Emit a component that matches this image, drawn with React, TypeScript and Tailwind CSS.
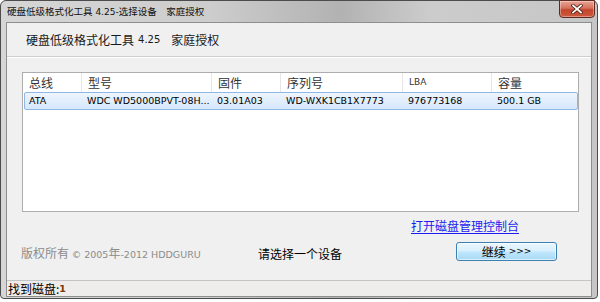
import React from "react";

const cols = [
  { label: "总线", w: "w-[59px]", latin: false },
  { label: "型号", w: "w-[130px]", latin: false },
  { label: "固件", w: "w-[69px]", latin: false },
  { label: "序列号", w: "w-[122px]", latin: false },
  { label: "LBA", w: "w-[89px]", latin: true },
  { label: "容量", w: "flex-1", latin: false },
];

const row = ["ATA", "WDC WD5000BPVT-08H...", "03.01A03", "WD-WXK1CB1X7773", "976773168", "500.1 GB"];

function Latin({ children, className = "" }: { children: React.ReactNode; className?: string }) {
  return <span className={"font-['DejaVu_Sans',sans-serif] text-[9.5px] " + className}>{children}</span>;
}

export default function App() {
  return (
    <div className="w-[600px] h-[302px] bg-white font-['Noto_Sans_CJK_SC',sans-serif] text-black">
      <div className="relative w-[598px] h-[299px] flex flex-col px-[5px] pb-[1px] border border-[#4c4c4c] rounded-t-[6px] rounded-b-[4px] bg-[linear-gradient(to_right,#d6d6d6,#cdcdcd_35%,#b2b2b2_57%,#cccccc_72%,#c6c6c6)]">
        {/* title bar */}
        <div className="h-[21px] flex items-center pl-[1px] text-[9.5px] text-[#111] leading-none">
          <span>
            硬盘低级格式化工具<Latin className="text-[9px]"> 4.25-</Latin>选择设备　家庭授权
          </span>
        </div>

        {/* close button */}
        <div className="absolute top-[-1px] right-[2px] w-[36px] h-[18px] rounded-b-[4px] border border-[#5e2a22] bg-[linear-gradient(to_bottom,#e9a697,#d5705c_45%,#c2452c_55%,#d0593c)] flex items-center justify-center shadow-[inset_0_0_0_1px_rgba(255,255,255,0.35)]">
          <svg width="12" height="10" viewBox="0 0 12 10">
            <path d="M2 1.5 L10 8.5 M10 1.5 L2 8.5" stroke="#4a1a12" strokeWidth="3.4" strokeLinecap="square" />
            <path d="M2 1.5 L10 8.5 M10 1.5 L2 8.5" stroke="#ffffff" strokeWidth="1.8" strokeLinecap="square" />
          </svg>
        </div>

        {/* client */}
        <div className="flex-1 flex flex-col border border-[#8e8e8e] bg-[#f0f0f0]">
          <div className="h-[34px] flex items-center pl-[19px] border-b border-[#cfcfcf] shadow-[0_1px_0_#ffffff] text-[12px] leading-none text-[#1a1a1a]">
            硬盘低级格式化工具<Latin className="text-[10px] ml-[4px]">4.25</Latin>
            <span className="ml-[11px]">家庭授权</span>
          </div>

          <div className="flex-1 flex flex-col">
            {/* list */}
            <div className="mt-[15px] ml-[15px] mr-[12px] h-[140px] border border-[#adadad] bg-white">
              <div className="h-[19px] flex items-center text-[12px] leading-none text-[#333]">
                {cols.map((c, i) => (
                  <div
                    key={c.label}
                    className={c.w + " h-full flex items-center pl-[6px] " + (i < cols.length - 1 ? "border-r border-[#e6e6e6]" : "")}
                  >
                    {c.latin ? <Latin className="text-[9px]">{c.label}</Latin> : c.label}
                  </div>
                ))}
              </div>
              <div className="ml-[1px] h-[18px] flex items-center rounded-[2px] border border-[#8fb6e4] bg-[linear-gradient(to_bottom,#eef5fe,#d5e7fb)] font-['DejaVu_Sans',sans-serif] text-[9.5px] leading-none">
                {cols.map((c, i) => (
                  <div key={c.label} className={(i === 0 ? "w-[58px]" : c.w) + " pl-[4px] whitespace-nowrap"}>
                    {row[i]}
                  </div>
                ))}
              </div>
            </div>

            {/* link */}
            <div className="mt-[6px] flex justify-end pr-[72px] text-[12px] leading-[16px]">
              <span className="text-[#1c1cf0] underline underline-offset-2">打开磁盘管理控制台</span>
            </div>

            {/* bottom row */}
            <div className="mt-[12px] flex items-center text-[12px] leading-none">
              <div className="w-[251px] pl-[14px] text-[#8c8c8c] whitespace-nowrap">
                版权所有 <Latin className="text-[9.5px]">© 2005</Latin>年<Latin className="text-[9.5px]">-2012 HDDGURU</Latin>
              </div>
              <div className="w-[198px]">请选择一个设备</div>
              <div className="w-[101px] h-[19px] flex items-center justify-center rounded-[3px] border border-[#3c7fb1] bg-[linear-gradient(to_bottom,#eaf6fd,#d9f0fc_45%,#bee6fd_55%,#a7d9f5)] shadow-[inset_0_0_0_1px_rgba(255,255,255,0.6)] -mt-[4px]">
                继续 <Latin className="ml-[3px] text-[9px]">&gt;&gt;&gt;</Latin>
              </div>
            </div>
          </div>

          {/* status bar */}
          <div className="h-[16px] flex items-center pl-[1px] border-t border-[#c4c4c4] bg-[#efecec] text-[12px] leading-none">
            找到磁盘:<Latin className="text-[#7a3a0a] font-bold">1</Latin>
          </div>
        </div>
      </div>
    </div>
  );
}
